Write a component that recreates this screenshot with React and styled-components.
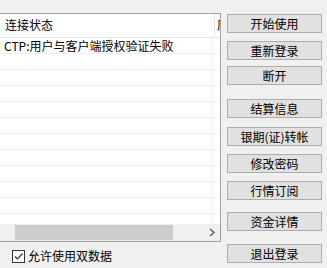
import React from 'react';
import styled, { createGlobalStyle } from 'styled-components';

const GlobalStyle = createGlobalStyle`
  html, body {
    margin: 0;
    padding: 0;
    background: #f0f0f0;
    font-family: "Noto Sans CJK SC", "Noto Sans", sans-serif;
    font-size: 12px;
    color: #000;
  }
`;

const buttons = [
  { label: '开始使用', gap: 0 },
  { label: '重新登录', gap: 8 },
  { label: '断开', gap: 6 },
  { label: '结算信息', gap: 14 },
  { label: '银期(证)转帐', gap: 9 },
  { label: '修改密码', gap: 8 },
  { label: '行情订阅', gap: 8 },
  { label: '资金详情', gap: 12 },
  { label: '退出登录', gap: 13 },
];

const rows = ['CTP:用户与客户端授权验证失败', '', '', '', '', '', '', '', '', '', '', ''];

const App = () => {
  return (
    <Window>
      <GlobalStyle />
      <LeftPane>
        <ListView>
          <HeaderRow>
            <HeaderCell>连接状态</HeaderCell>
            <HeaderCell $clip>原因</HeaderCell>
          </HeaderRow>
          <Body>
            {rows.map((text, i) => (
              <Row key={i}>
                <Cell>{text}</Cell>
              </Row>
            ))}
          </Body>
          <ScrollBar>
            <ScrollGap />
            <Thumb />
            <Track />
            <Arrow>
              <svg width="8" height="9" viewBox="0 0 8 9">
                <path d="M2 1 L6 4.5 L2 8" fill="none" stroke="#606060" strokeWidth="1.6" />
              </svg>
            </Arrow>
          </ScrollBar>
        </ListView>
        <CheckRow>
          <CheckBox>
            <svg width="11" height="11" viewBox="0 0 11 11">
              <path d="M2 5.5 L4.5 8 L9.5 2.5" fill="none" stroke="#333" strokeWidth="1.2" />
            </svg>
          </CheckBox>
          <span>允许使用双数据</span>
        </CheckRow>
      </LeftPane>
      <ButtonColumn>
        {buttons.map((b) => (
          <ActionButton key={b.label} $gap={b.gap}>
            {b.label}
          </ActionButton>
        ))}
      </ButtonColumn>
    </Window>
  );
};

const Window = styled.div`
  display: flex;
  width: 327px;
  height: 268px;
  overflow: hidden;
`;

const LeftPane = styled.div`
  width: 221px;
  display: flex;
  flex-direction: column;
  padding-top: 13px;
`;

const ListView = styled.div`
  box-sizing: border-box;
  width: 221px;
  height: 229px;
  display: flex;
  flex-direction: column;
  background: #fff;
  border-top: 1px solid #a0a0a0;
  border-right: 1px solid #a0a0a0;
  border-bottom: 1px solid #a0a0a0;
  overflow: hidden;
`;

const HeaderRow = styled.div`
  display: flex;
  height: 24px;
  border-bottom: 1px solid #e5e5e5;
  box-sizing: border-box;
  flex-shrink: 0;
`;

const HeaderCell = styled.div`
  box-sizing: border-box;
  width: ${(p) => (p.$clip ? '6px' : '215px')};
  flex-shrink: 0;
  padding-left: ${(p) => (p.$clip ? '2px' : '5px')};
  line-height: 22px;
  white-space: nowrap;
  overflow: hidden;
  border-right: ${(p) => (p.$clip ? 'none' : '1px solid #e5e5e5')};
`;

const Body = styled.div`
  flex: 1;
  overflow: hidden;
`;

const Row = styled.div`
  box-sizing: border-box;
  height: 16px;
  border-bottom: 1px solid #f0f0f0;
`;

const Cell = styled.div`
  box-sizing: border-box;
  width: 212px;
  height: 15px;
  padding-left: 4px;
  line-height: 15px;
  white-space: nowrap;
  overflow: hidden;
  border-right: 1px solid #f0f0f0;
`;

const ScrollBar = styled.div`
  display: flex;
  align-items: center;
  height: 17px;
  flex-shrink: 0;
  background: #f0f0f0;
`;

const ScrollGap = styled.div`
  width: 15px;
`;

const Thumb = styled.div`
  width: 158px;
  height: 15px;
  background: #cdcdcd;
`;

const Track = styled.div`
  flex: 1;
`;

const Arrow = styled.div`
  width: 17px;
  display: flex;
  align-items: center;
  justify-content: center;

  svg {
    display: block;
  }
`;

const CheckRow = styled.div`
  display: flex;
  align-items: center;
  gap: 3px;
  padding-left: 12px;
  margin-top: 7px;
  line-height: 14px;
`;

const CheckBox = styled.div`
  box-sizing: border-box;
  width: 13px;
  height: 13px;
  border: 1px solid #333;
  background: #fff;

  svg {
    display: block;
  }
`;

const ButtonColumn = styled.div`
  display: flex;
  flex-direction: column;
  padding-left: 6px;
  padding-top: 14px;
`;

const ActionButton = styled.button`
  box-sizing: border-box;
  width: 95px;
  height: 19px;
  margin-top: ${(p) => p.$gap}px;
  padding: 0;
  background: #e1e1e1;
  border: 1px solid #adadad;
  border-radius: 0;
  font-family: "Noto Sans CJK SC", "Noto Sans", sans-serif;
  font-size: 12px;
  line-height: 17px;
  color: #000;
`;

export default App;
